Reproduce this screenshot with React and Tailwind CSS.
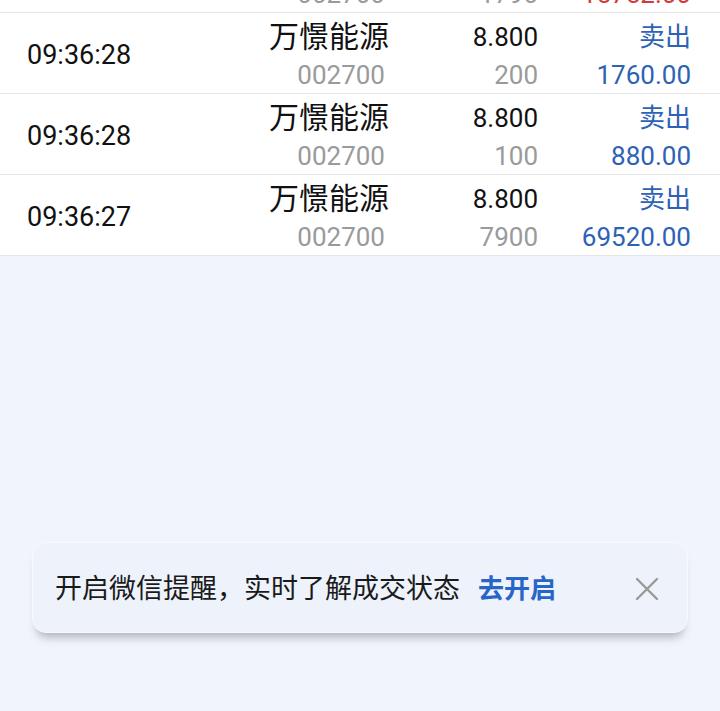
const trades = [
  { time: "09:36:28", name: "万憬能源", code: "002700", price: "8.800", qty: "1790", side: "卖出", amount: "15752.00", red: true },
  { time: "09:36:28", name: "万憬能源", code: "002700", price: "8.800", qty: "200", side: "卖出", amount: "1760.00" },
  { time: "09:36:28", name: "万憬能源", code: "002700", price: "8.800", qty: "100", side: "卖出", amount: "880.00" },
  { time: "09:36:27", name: "万憬能源", code: "002700", price: "8.800", qty: "7900", side: "卖出", amount: "69520.00" },
];

function TradeRow({ t, first }) {
  return (
    <div
      className={`flex h-[81px] items-center border-b border-[#e6e6e6] bg-white pl-[27px] pr-[29px] ${first ? "-mt-[68px]" : ""}`}
    >
      <div className="flex-1 pt-[4px] text-[27px] text-[#111]">{t.time}</div>
      <div className="flex h-full w-[150px] flex-col pt-[5px] text-right">
        <div className="h-[38px] text-[30px] leading-[38px] text-[#111]">{t.name}</div>
        <div className="h-[38px] pr-[4px] text-[26px] leading-[38px] text-[#9a9a9a]">{t.code}</div>
      </div>
      <div className="flex h-full w-[149px] flex-col pt-[5px] text-right">
        <div className="h-[38px] text-[26px] leading-[38px] text-[#111]">{t.price}</div>
        <div className="h-[38px] text-[26px] leading-[38px] text-[#9a9a9a]">{t.qty}</div>
      </div>
      <div className="flex h-full w-[153px] flex-col pt-[5px] text-right">
        <div className="h-[38px] text-[26px] leading-[38px] text-[#2d62b4]">{t.side}</div>
        <div className={`h-[38px] text-[26px] leading-[38px] ${t.red ? "text-[#d23a3a]" : "text-[#2d62b4]"}`}>
          {t.amount}
        </div>
      </div>
    </div>
  );
}

export default function App() {
  return (
    <div
      className="flex h-[711px] w-[720px] flex-col overflow-hidden bg-[#f1f4fc]"
      style={{ fontFamily: 'Roboto, "Noto Sans CJK SC", sans-serif' }}
    >
      <div>
        {trades.map((t, i) => (
          <TradeRow key={i} t={t} first={i === 0} />
        ))}
      </div>

      <div className="mx-[32px] mt-[286px] flex h-[91px] items-center rounded-[14px] border border-[#f7f9fe] bg-[#edf2fb] pl-[22px] pr-[28px] pt-[3px] shadow-[0_9px_10px_-5px_rgba(0,0,0,0.28)]">
        <span className="text-[27px] text-[#1a1a1a]">开启微信提醒，实时了解成交状态</span>
        <span className="ml-[18px] text-[26px] font-bold text-[#2765c8]">去开启</span>
        <div className="flex-1" />
        <svg width="24" height="24" viewBox="0 0 24 24" className="text-[#9a9a9a]">
          <path d="M2 2 L22 22 M22 2 L2 22" stroke="currentColor" strokeWidth="2.4" strokeLinecap="round" />
        </svg>
      </div>
    </div>
  );
}
